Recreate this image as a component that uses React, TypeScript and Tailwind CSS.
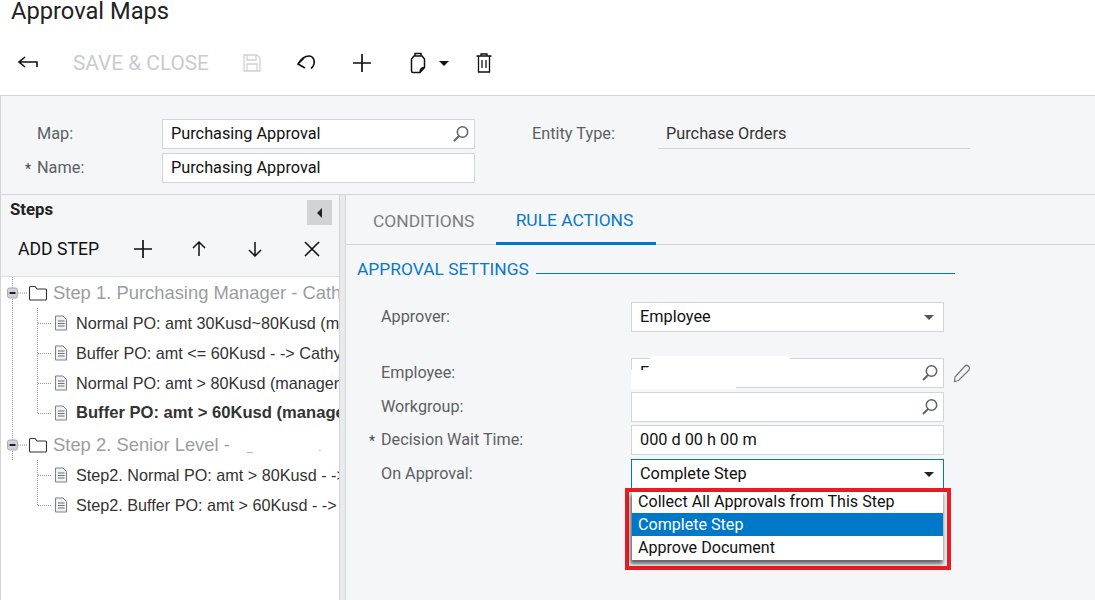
import type { ReactNode } from 'react';

const font = { fontFamily: 'Roboto, "Liberation Sans", sans-serif' };
const treeFont = { fontFamily: '"Liberation Sans", Arial, sans-serif' };

function SearchIcon() {
  return (
    <svg width="18" height="18" viewBox="0 0 18 18" fill="none" stroke="#5f6368" strokeWidth="1.5" className="shrink-0">
      <circle cx="10.5" cy="7" r="5.2" />
      <path d="M7 11 L2 16" strokeWidth="2" />
    </svg>
  );
}

function Caret({ color = '#555' }: { color?: string }) {
  return <div className="h-0 w-0 border-x-[5px] border-t-[5px] border-x-transparent" style={{ borderTopColor: color }} />;
}

function Field({ children, className = '', right }: { children?: ReactNode; className?: string; right?: ReactNode }) {
  return (
    <div className={`relative flex h-[30px] items-center justify-between border border-[#d2d4d7] bg-white pl-2 pr-[4px] text-[16.3px] text-[#111] ${className}`}>
      <span>{children}</span>
      {right}
    </div>
  );
}

function FormRow({ label, required, children, className = '' }: { label: string; required?: boolean; children: ReactNode; className?: string }) {
  return (
    <div className={`flex items-center ${className}`}>
      <div className="relative w-[285px] pl-[35px] text-[16.2px] text-[#5c5f63]">
        {required && <span className="absolute left-[23px] top-[3px] text-[14px] text-[#444]">*</span>}
        {label}
      </div>
      <div className="w-[313px]">{children}</div>
    </div>
  );
}

function Folder() {
  return (
    <svg width="20" height="18" viewBox="0 0 20 18" fill="none" stroke="#333" strokeWidth="1.1" className="shrink-0">
      <path d="M1.5 15 V3.5 Q1.5 2.5 2.5 2.5 H7 L9 5 H17.5 Q18.5 5 18.5 6 V15 Q18.5 16 17.5 16 H2.5 Q1.5 16 1.5 15 Z" />
    </svg>
  );
}

function FolderRow({ children }: { children: ReactNode }) {
  return (
    <div className="flex h-[31px] items-center whitespace-nowrap text-[18.4px] text-[#9a9da1]" style={treeFont}>
      <svg width="27" height="31" viewBox="0 0 27 31" className="shrink-0">
        <path d="M11.5 0 V11 M11.5 22 V31" stroke="#999" strokeDasharray="1 1" fill="none" />
        <path d="M17 16 H26" stroke="#999" strokeDasharray="1 1" fill="none" />
        <rect x="6.5" y="11" width="10" height="10" rx="2" fill="#cfd3d8" stroke="#aab" />
        <path d="M8.5 16 H14.5" stroke="#222" strokeWidth="2" />
      </svg>
      <Folder />
      <span className="ml-[5px]">{children}</span>
    </div>
  );
}

function LeafRow({ children, bold, last, lastGroup }: { children: string; bold?: boolean; last?: boolean; lastGroup?: boolean }) {
  return (
    <div className={`flex h-[30px] items-center whitespace-nowrap text-[#333] ${bold ? 'text-[16.6px] font-bold' : 'text-[16.2px]'}`} style={treeFont}>
      <svg width="53" height="30" viewBox="0 0 53 30" className="shrink-0">
        {!lastGroup && <path d="M11.5 0 V30" stroke="#999" strokeDasharray="1 1" fill="none" />}
        <path d={last ? 'M36.5 0 V15.5' : 'M36.5 0 V30'} stroke="#999" strokeDasharray="1 1" fill="none" />
        <path d="M37 15.5 H50" stroke="#999" strokeDasharray="1 1" fill="none" />
      </svg>
      <svg width="14" height="16" viewBox="0 0 14 16" fill="none" className="shrink-0">
        <path d="M1.5 1 H9 L12.5 4.5 V15 H1.5 Z" fill="#f0f1f3" stroke="#7d8186" />
        <path d="M4 6 H10.5 M4 8.5 H10.5 M4 11 H10.5" stroke="#6d7176" strokeWidth="1.1" />
      </svg>
      <span className="ml-[8px]">{children}</span>
    </div>
  );
}

function Toolbar() {
  return (
    <div className="flex h-[50px] items-center">
      <svg width="24" height="18" viewBox="0 0 24 18" fill="none" stroke="#111" strokeWidth="1.6" className="ml-[17px] shrink-0">
        <path d="M8 3 L2 8 L8 13 M2 8 H20 V13" />
      </svg>
      <span className="ml-[32px] pt-[2px] text-[20.8px] text-[#c9cbce]">SAVE &amp; CLOSE</span>
      <svg width="20" height="20" viewBox="0 0 20 20" fill="none" stroke="#cfd1d4" strokeWidth="1.3" className="ml-[33px] shrink-0">
        <path d="M2 2 H15 L18 5 V18 H2 Z M5 2 V7 H14 V2 M5 18 V11 H15 V18" />
      </svg>
      <svg width="22" height="20" viewBox="0 0 22 20" fill="none" stroke="#111" strokeWidth="1.6" className="ml-[34px] shrink-0">
        <path d="M8 5 L2 11 L9 15 M2 11 C5 6 9 3 13 3 C17 3 19 7 18 11 C17.5 13 16.5 14.5 15 15.5" />
      </svg>
      <svg width="22" height="22" viewBox="0 0 22 22" fill="none" stroke="#111" strokeWidth="1.7" className="ml-[33px] shrink-0">
        <path d="M11 2 V20 M2 11 H20" />
      </svg>
      <svg width="18" height="22" viewBox="0 0 18 22" fill="none" stroke="#111" strokeWidth="1.5" className="ml-[36px] shrink-0">
        <path d="M2.5 7 L5 4 H13 L15.5 7 V15.5 L11 20.5 H4 Q2.5 20.5 2.5 19 Z M6 4 V1.5 H12 V4 M11 20.5 Q11 15.5 15.5 15.5" />
      </svg>
      <div className="ml-[12px]">
        <Caret color="#111" />
      </div>
      <svg width="18" height="22" viewBox="0 0 18 22" fill="none" stroke="#111" strokeWidth="1.3" className="ml-[26px] shrink-0">
        <path d="M1.5 4 H16.5 M6 4 V2 H12 V4 M3.5 4 V20 H14.5 V4 M7 8 V16 M11 8 V16" />
      </svg>
    </div>
  );
}

function StepsPanel() {
  return (
    <div className="flex w-[338px] shrink-0 flex-col overflow-hidden">
      <div className="flex h-[32px] items-start justify-between pl-[9px] pr-[7px] pt-[4px]">
        <span className="text-[16.8px] font-bold leading-[20px] text-[#222]">Steps</span>
        <div className="mt-px flex h-[25px] w-[25px] items-center justify-center bg-[#d1d3d6]">
          <div className="h-0 w-0 border-y-[5px] border-r-[5px] border-y-transparent border-r-[#222]" />
        </div>
      </div>
      <div className="flex h-[50px] items-center border-b border-[#dfe1e5] pb-[5px] text-[17.6px] text-[#111]">
        <span className="ml-[17px]">ADD STEP</span>
        <svg width="20" height="20" viewBox="0 0 20 20" fill="none" stroke="#111" strokeWidth="1.7" className="ml-[34px] shrink-0">
          <path d="M10 1 V19 M1 10 H19" />
        </svg>
        <svg width="18" height="18" viewBox="0 0 18 18" fill="none" stroke="#111" strokeWidth="1.5" className="ml-[37px] shrink-0">
          <path d="M9 16 V2 M3 8 L9 2 L15 8" />
        </svg>
        <svg width="18" height="18" viewBox="0 0 18 18" fill="none" stroke="#111" strokeWidth="1.5" className="ml-[38px] shrink-0">
          <path d="M9 2 V16 M3 10 L9 16 L15 10" />
        </svg>
        <svg width="18" height="18" viewBox="0 0 18 18" fill="none" stroke="#111" strokeWidth="1.6" className="ml-[39px] shrink-0">
          <path d="M2 2 L16 16 M16 2 L2 16" />
        </svg>
      </div>
      <div className="flex-1 bg-white">
        <FolderRow>Step 1. Purchasing Manager - Cathy Smith</FolderRow>
        <LeafRow>Normal PO: amt 30Kusd~80Kusd (manager)</LeafRow>
        <LeafRow>Buffer PO: amt &lt;= 60Kusd - -&gt; Cathy Smith</LeafRow>
        <LeafRow>Normal PO: amt &gt; 80Kusd (manager approval)</LeafRow>
        <LeafRow bold last>Buffer PO: amt &gt; 60Kusd (manager approval)</LeafRow>
        <div className="mt-[1px]">
          <FolderRow>
            Step 2. Senior Level - <span className="ml-[12px] text-[10px]">_</span>
            <span className="ml-[66px] text-[10px]">.</span>
          </FolderRow>
        </div>
        <LeafRow lastGroup>Step2. Normal PO: amt &gt; 80Kusd - -&gt; Senior</LeafRow>
        <LeafRow lastGroup last>Step2. Buffer PO: amt &gt; 60Kusd - -&gt; Senior</LeafRow>
      </div>
    </div>
  );
}

function RuleActions() {
  return (
    <div className="flex min-w-0 flex-1 flex-col">
      <div className="flex h-[50px] border-b border-[#d2d4d7] pl-[6px] text-[17.4px]">
        <div className="flex w-[144px] items-center pl-[21px] pt-[4px] text-[#7b7e82]">CONDITIONS</div>
        <div className="-mb-px flex h-[50px] w-[160px] items-center justify-center border-b-[3px] border-[#0078c8] pr-[3px] pt-[4px] text-[#0a78c6]">
          RULE ACTIONS
        </div>
      </div>
      <div className="ml-[11px] mt-[14px] flex w-[598px] items-center text-[17.4px] leading-[20px] text-[#0a78c6]">
        <span className="whitespace-nowrap">APPROVAL SETTINGS</span>
        <div className="ml-[7px] mt-[9px] h-px flex-1 bg-[#0078c8]" />
      </div>
      <FormRow label="Approver:" className="mt-[23px]">
        <Field right={<div className="mr-[5px]"><Caret /></div>}>Employee</Field>
      </FormRow>
      <div className="relative mt-[26px]">
        <FormRow label="Employee:">
          <Field right={<SearchIcon />}>
            F
            <div className="absolute -top-[3px] left-[18px] h-[13px] w-[140px] rounded-sm bg-white" />
            <div className="absolute -left-px top-[11px] h-[19px] w-[105px] bg-white" />
          </Field>
        </FormRow>
        <svg width="20" height="20" viewBox="0 0 20 20" fill="none" stroke="#777" strokeWidth="1.2" className="absolute left-[606px] top-[5px]">
          <path d="M3 14 L13 3 Q14.5 1.5 16 3 L17 4 Q18 5.5 17 7 L6.5 17.5 L2.5 18.5 Z" />
        </svg>
      </div>
      <FormRow label="Workgroup:" className="mt-[4px]">
        <Field right={<SearchIcon />} />
      </FormRow>
      <FormRow label="Decision Wait Time:" required className="mt-[3px]">
        <Field>000 d 00 h 00 m</Field>
      </FormRow>
      <div className="relative mt-[4px]">
        <FormRow label="On Approval:">
          <Field className="!border-[#0078c8]" right={<div className="mr-[5px]"><Caret color="#222" /></div>}>
            Complete Step
          </Field>
        </FormRow>
        {/* open dropdown with the red highlight box round it */}
        <div className="absolute left-[279px] top-[29px] h-[82px] w-[326px] border-[4px] border-[#ed1c24]" />
        <div className="absolute left-[286px] top-[33px] w-[311px] bg-white pb-[1px] text-[16.1px] leading-[23px] text-[#111] shadow-[-1px_3px_4px_1px_rgba(0,0,0,0.6)]">
          <div className="h-[21px] pl-[6px] leading-[19px]">Collect All Approvals from This Step</div>
          <div className="bg-[#0078c8] pl-[6px] text-white">Complete Step</div>
          <div className="pl-[6px]">Approve Document</div>
        </div>
      </div>
    </div>
  );
}

export default function App() {
  return (
    <div className="flex h-[600px] w-[1095px] flex-col overflow-hidden bg-white" style={font}>
      <div className="h-[95px] shrink-0">
        <h1 className="pl-[11px] text-[23.7px] leading-[23px] text-[#222]">Approval Maps</h1>
        <div className="mt-[15px]">
          <Toolbar />
        </div>
      </div>
      <div className="flex min-h-0 flex-1 flex-col border-l border-t border-[#d2d4d7] bg-[#f5f6f8]">
        <div className="flex h-[99px] shrink-0 border-b border-[#d2d4d7] pt-[23px] text-[16.3px]">
          <div className="flex w-[474px] shrink-0 flex-col gap-[4px]">
            <div className="flex items-center">
              <div className="w-[161px] pl-[36px] text-[#5c5f63]">Map:</div>
              <div className="w-[313px]">
                <Field right={<SearchIcon />}>Purchasing Approval</Field>
              </div>
            </div>
            <div className="flex items-center">
              <div className="relative w-[161px] pl-[36px] text-[#5c5f63]">
                <span className="absolute left-[24px] top-[3px] text-[14px] text-[#444]">*</span>
                Name:
              </div>
              <div className="w-[313px]">
                <Field>Purchasing Approval</Field>
              </div>
            </div>
          </div>
          <div className="ml-[57px] w-[126px] pt-[3px] text-[#5c5f63]">Entity Type:</div>
          <div className="h-[30px] w-[312px] border-b border-[#d2d4d7] pl-[8px] pt-[3px] text-[#333]">Purchase Orders</div>
        </div>
        <div className="flex min-h-0 flex-1">
          <StepsPanel />
          <div className="w-[7px] shrink-0 border-x border-[#d2d4d7] bg-[#e9eaec]" />
          <RuleActions />
        </div>
      </div>
    </div>
  );
}
